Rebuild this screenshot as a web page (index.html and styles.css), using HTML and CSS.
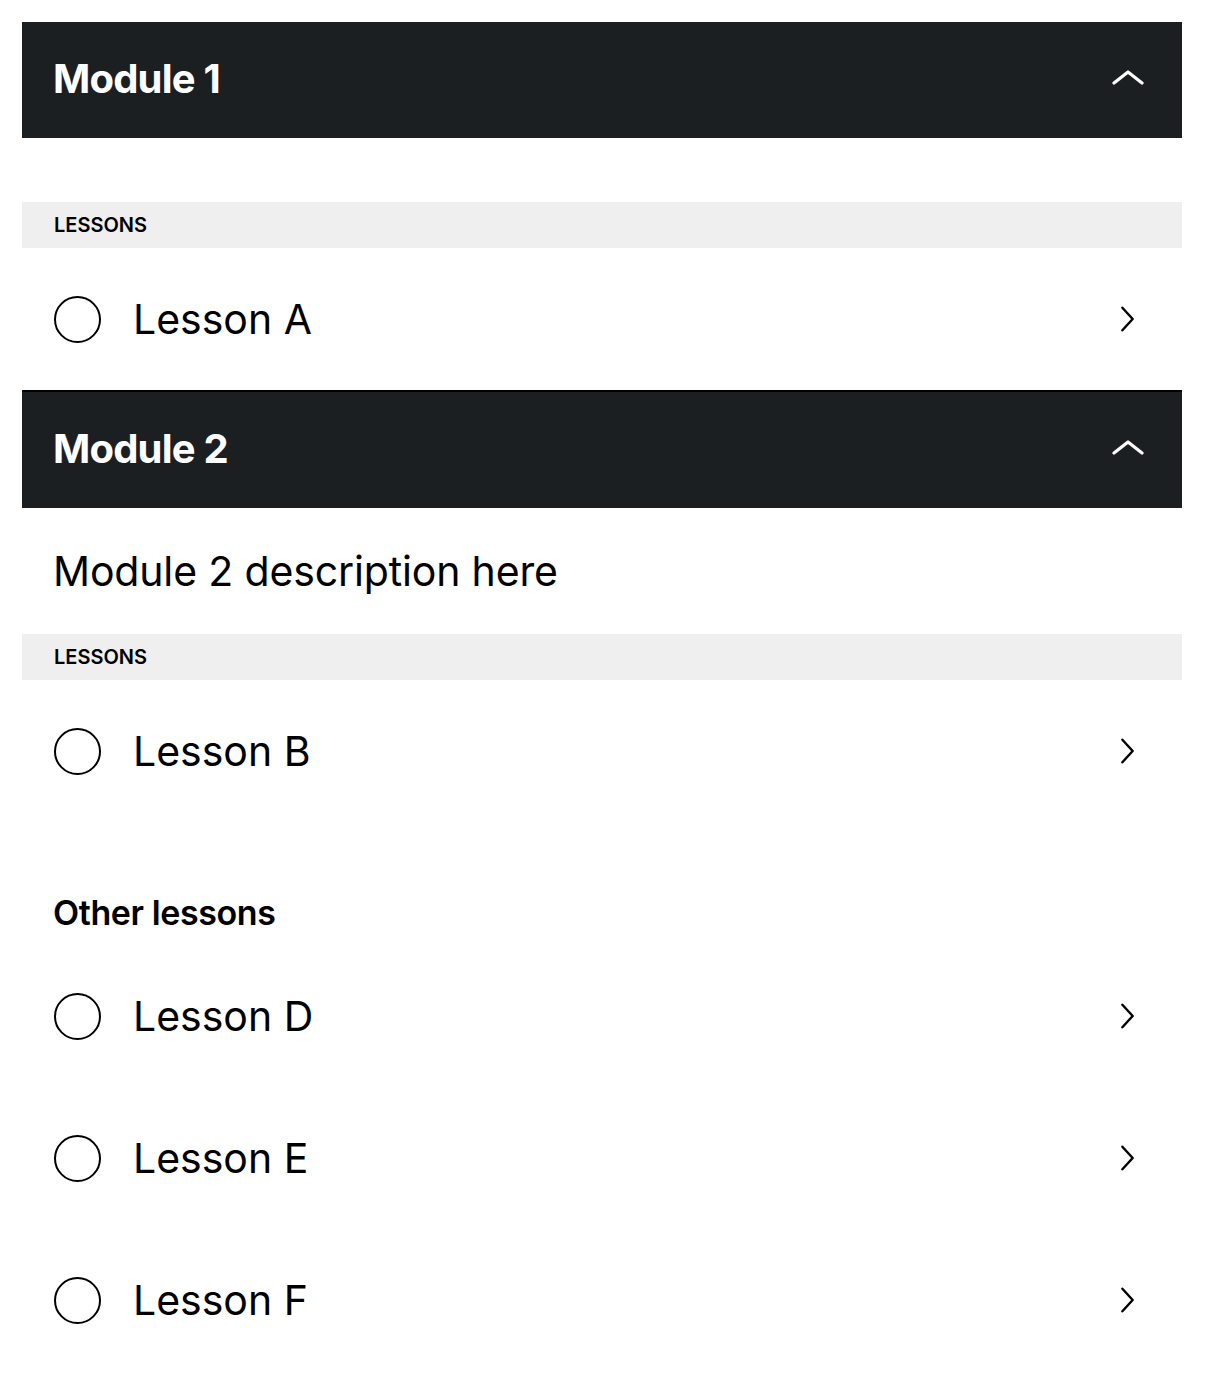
FILE: index.html
```html
<!DOCTYPE html>
<html lang="en">

<head>
  <meta charset="UTF-8">
  <meta name="viewport" content="width=device-width, initial-scale=1.0">
  <title>Course</title>
  <link rel="stylesheet" href="styles.css">
</head>

<body>
  <div class="course">
    <section class="module">
      <div class="module-header">
        <h2>Module 1</h2>
        <svg class="icon" viewBox="0 0 32 32"><path d="M2 20 L16 9 L30 20" /></svg>
      </div>
      <div class="module-desc"></div>
      <div class="lessons-label">LESSONS</div>
      <div class="lesson">
        <span class="status"></span>
        <span class="lesson-name">Lesson A</span>
        <svg class="icon arrow" viewBox="0 0 32 32"><path d="M10 4 L21 16 L10 28" /></svg>
      </div>
    </section>

    <section class="module">
      <div class="module-header">
        <h2>Module 2</h2>
        <svg class="icon" viewBox="0 0 32 32"><path d="M2 20 L16 9 L30 20" /></svg>
      </div>
      <div class="module-desc">Module 2 description here</div>
      <div class="lessons-label">LESSONS</div>
      <div class="lesson">
        <span class="status"></span>
        <span class="lesson-name">Lesson B</span>
        <svg class="icon arrow" viewBox="0 0 32 32"><path d="M10 4 L21 16 L10 28" /></svg>
      </div>
    </section>

    <section class="other">
      <h3>Other lessons</h3>
      <div class="lesson">
        <span class="status"></span>
        <span class="lesson-name">Lesson D</span>
        <svg class="icon arrow" viewBox="0 0 32 32"><path d="M10 4 L21 16 L10 28" /></svg>
      </div>
      <div class="lesson">
        <span class="status"></span>
        <span class="lesson-name">Lesson E</span>
        <svg class="icon arrow" viewBox="0 0 32 32"><path d="M10 4 L21 16 L10 28" /></svg>
      </div>
      <div class="lesson">
        <span class="status"></span>
        <span class="lesson-name">Lesson F</span>
        <svg class="icon arrow" viewBox="0 0 32 32"><path d="M10 4 L21 16 L10 28" /></svg>
      </div>
    </section>
  </div>
</body>

</html>
```

FILE: styles.css
```css
body {
  font-family: Inter, 'Noto Sans', sans-serif;
  background-color: #fff;
  color: #000;
  margin: 0;
}

.course {
  width: 1160px;
  padding: 22px;
}

.module-header {
  display: flex;
  justify-content: space-between;
  align-items: center;
  height: 116px;
  padding: 0 38px 3px 31px;
  box-sizing: border-box;
  background-color: #1c1f22;
  color: #fff;
}

.module + .module .module-header {
  height: 118px;
  border-top: 2px solid #000;
}

.module-header h2 {
  margin: 0;
  font-size: 40px;
  font-weight: 700;
  letter-spacing: -0.8px;
}

.icon {
  width: 32px;
  height: 32px;
  fill: none;
  stroke: #fff;
  stroke-width: 3.2;
  stroke-linecap: round;
  stroke-linejoin: round;
}

.icon.arrow {
  stroke: #000;
  stroke-width: 2.6;
  width: 30px;
  height: 30px;
  margin-right: 1px;
}

.module-desc {
  padding: 32px 31px;
  font-size: 41px;
  line-height: 62px;
  letter-spacing: -0.15px;
}

.module-desc:empty {
  padding: 32px 0;
}

.lessons-label {
  height: 46px;
  display: flex;
  align-items: center;
  padding-left: 32px;
  background-color: #efefef;
  font-size: 20px;
  font-weight: 600;
  letter-spacing: 0;
}

.lesson {
  display: flex;
  align-items: center;
  height: 142px;
  padding: 0 38px 0 32px;
}

.status {
  width: 43px;
  height: 43px;
  border: 2px solid #000;
  border-radius: 50%;
  flex-shrink: 0;
}

.lesson-name {
  flex: 1;
  margin-left: 32px;
  font-size: 41px;
}

.other {
  padding-top: 70px;
}

.other h3 {
  margin: 0 0 11px;
  padding-left: 31px;
  font-size: 34px;
  font-weight: 600;
  letter-spacing: -0.4px;
  line-height: 42px;
}
```
